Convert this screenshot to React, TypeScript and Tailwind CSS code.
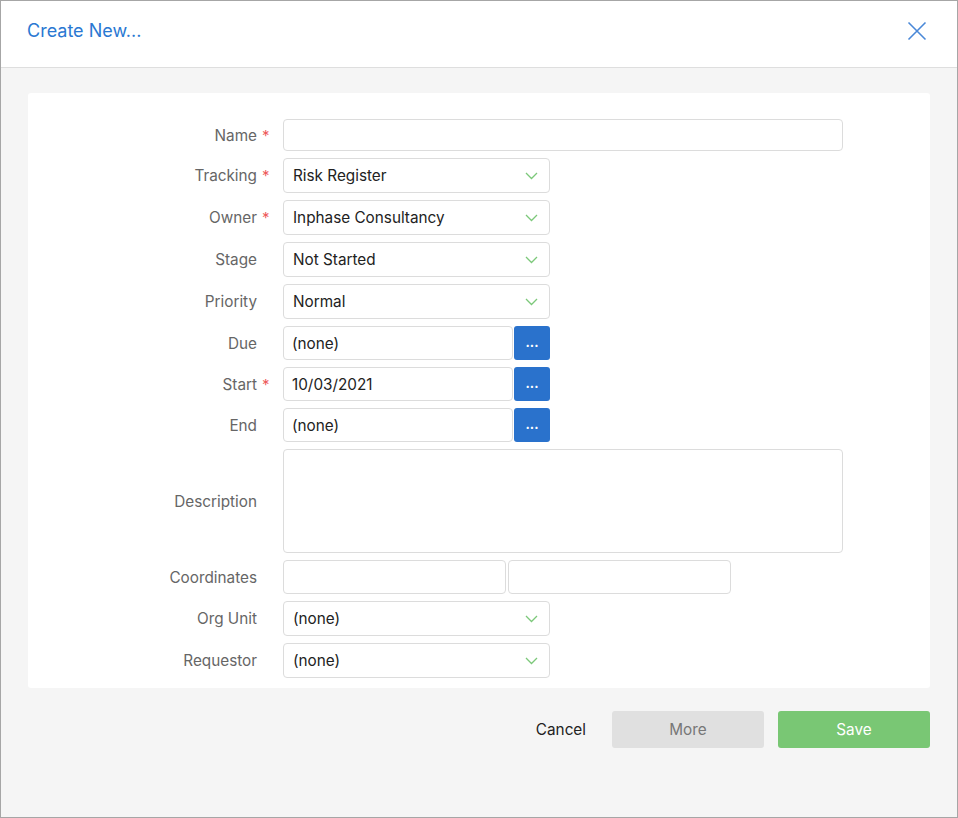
import { ReactNode } from "react";

type Row =
  | { label: string; required?: boolean; kind: "text"; h: string }
  | { label: string; required?: boolean; kind: "select"; value: string }
  | { label: string; required?: boolean; kind: "date"; value: string }
  | { label: string; kind: "area" }
  | { label: string; kind: "coords" };

const rows: Row[] = [
  { label: "Name", required: true, kind: "text", h: "h-[32px]" },
  { label: "Tracking", required: true, kind: "select", value: "Risk Register" },
  { label: "Owner", required: true, kind: "select", value: "Inphase Consultancy" },
  { label: "Stage", kind: "select", value: "Not Started" },
  { label: "Priority", kind: "select", value: "Normal" },
  { label: "Due", kind: "date", value: "(none)" },
  { label: "Start", required: true, kind: "date", value: "10/03/2021" },
  { label: "End", kind: "date", value: "(none)" },
  { label: "Description", kind: "area" },
  { label: "Coordinates", kind: "coords" },
  { label: "Org Unit", kind: "select", value: "(none)" },
  { label: "Requestor", kind: "select", value: "(none)" },
];

function Chevron() {
  return (
    <svg width="13" height="8" viewBox="0 0 13 8" fill="none">
      <path d="M1 1l5.5 5.5L12 1" stroke="#7cc87a" strokeWidth="1.3" />
    </svg>
  );
}

function Field({ row }: { row: Row }): ReactNode {
  const box = "rounded-[4px] border border-[#dcdcdc] bg-white";
  switch (row.kind) {
    case "text":
      return <div className={`${box} ${row.h} w-[560px]`} />;
    case "select":
      return (
        <div
          className={`${box} h-[35px] w-[267px] flex items-center justify-between pl-[9px] pr-[11px] text-[15.3px] text-[#222]`}
        >
          <span className="pt-[2px]">{row.value}</span>
          <Chevron />
        </div>
      );
    case "date":
      return (
        <div className="flex h-[34px] gap-[1px]">
          <div className={`${box} w-[230px] flex items-center pl-[8px] pt-[2px] text-[15.3px] text-[#222]`}>
            {row.value}
          </div>
          <button className="w-[36px] rounded-[3px] bg-[#2a72cc] text-white text-[13px] font-bold leading-none pb-[2px]">
            ...
          </button>
        </div>
      );
    case "area":
      return <div className={`${box} h-[104px] w-[560px]`} />;
    case "coords":
      return (
        <div className="flex h-[34px] gap-[2px]">
          <div className={`${box} w-[223px]`} />
          <div className={`${box} w-[223px]`} />
        </div>
      );
  }
}

export default function App() {
  return (
    <div
      className="w-[958px] h-[818px] border border-[#a6a6a6] bg-[#f5f5f5] flex flex-col"
      style={{ fontFamily: "Inter, 'Noto Sans', sans-serif" }}
    >
      <header className="h-[67px] bg-white border-b border-[#dedede] flex items-center justify-between pl-[26px] pr-[30px] shrink-0">
        <h1 className="text-[18px] text-[#2a78d2] pb-[7px]">Create New...</h1>
        <svg width="20" height="20" viewBox="0 0 20 20" className="mb-[6px]">
          <path d="M1.5 1.5l17 17M18.5 1.5l-17 17" stroke="#4a88d8" strokeWidth="1.6" />
        </svg>
      </header>

      <div className="px-[27px] pt-[25px]">
        <section className="rounded-[3px] bg-white pt-[26px] pb-[10px] flex flex-col gap-[7px]">
          {rows.map((row) => (
            <div key={row.label} className="flex items-center">
              <div className="w-[229px] text-right text-[15.3px] text-[#666] pt-[2px]">{row.label}</div>
              <div className="w-[26px] pl-[5px] text-[15px] text-[#ee5a5a] leading-none">
                {"required" in row && row.required ? "*" : ""}
              </div>
              <Field row={row} />
            </div>
          ))}
        </section>

        <div className="mt-[23px] flex items-center justify-end gap-[14px]">
          <button className="px-[12px] pt-[2px] text-[15.3px] text-[#222]">Cancel</button>
          <button className="h-[37px] w-[152px] rounded-[3px] bg-[#e0e0e0] pt-[2px] text-[15.3px] text-[#777]">
            More
          </button>
          <button className="h-[37px] w-[152px] rounded-[3px] bg-[#79c774] pt-[2px] text-[15.3px] text-white">
            Save
          </button>
        </div>
      </div>
    </div>
  );
}
